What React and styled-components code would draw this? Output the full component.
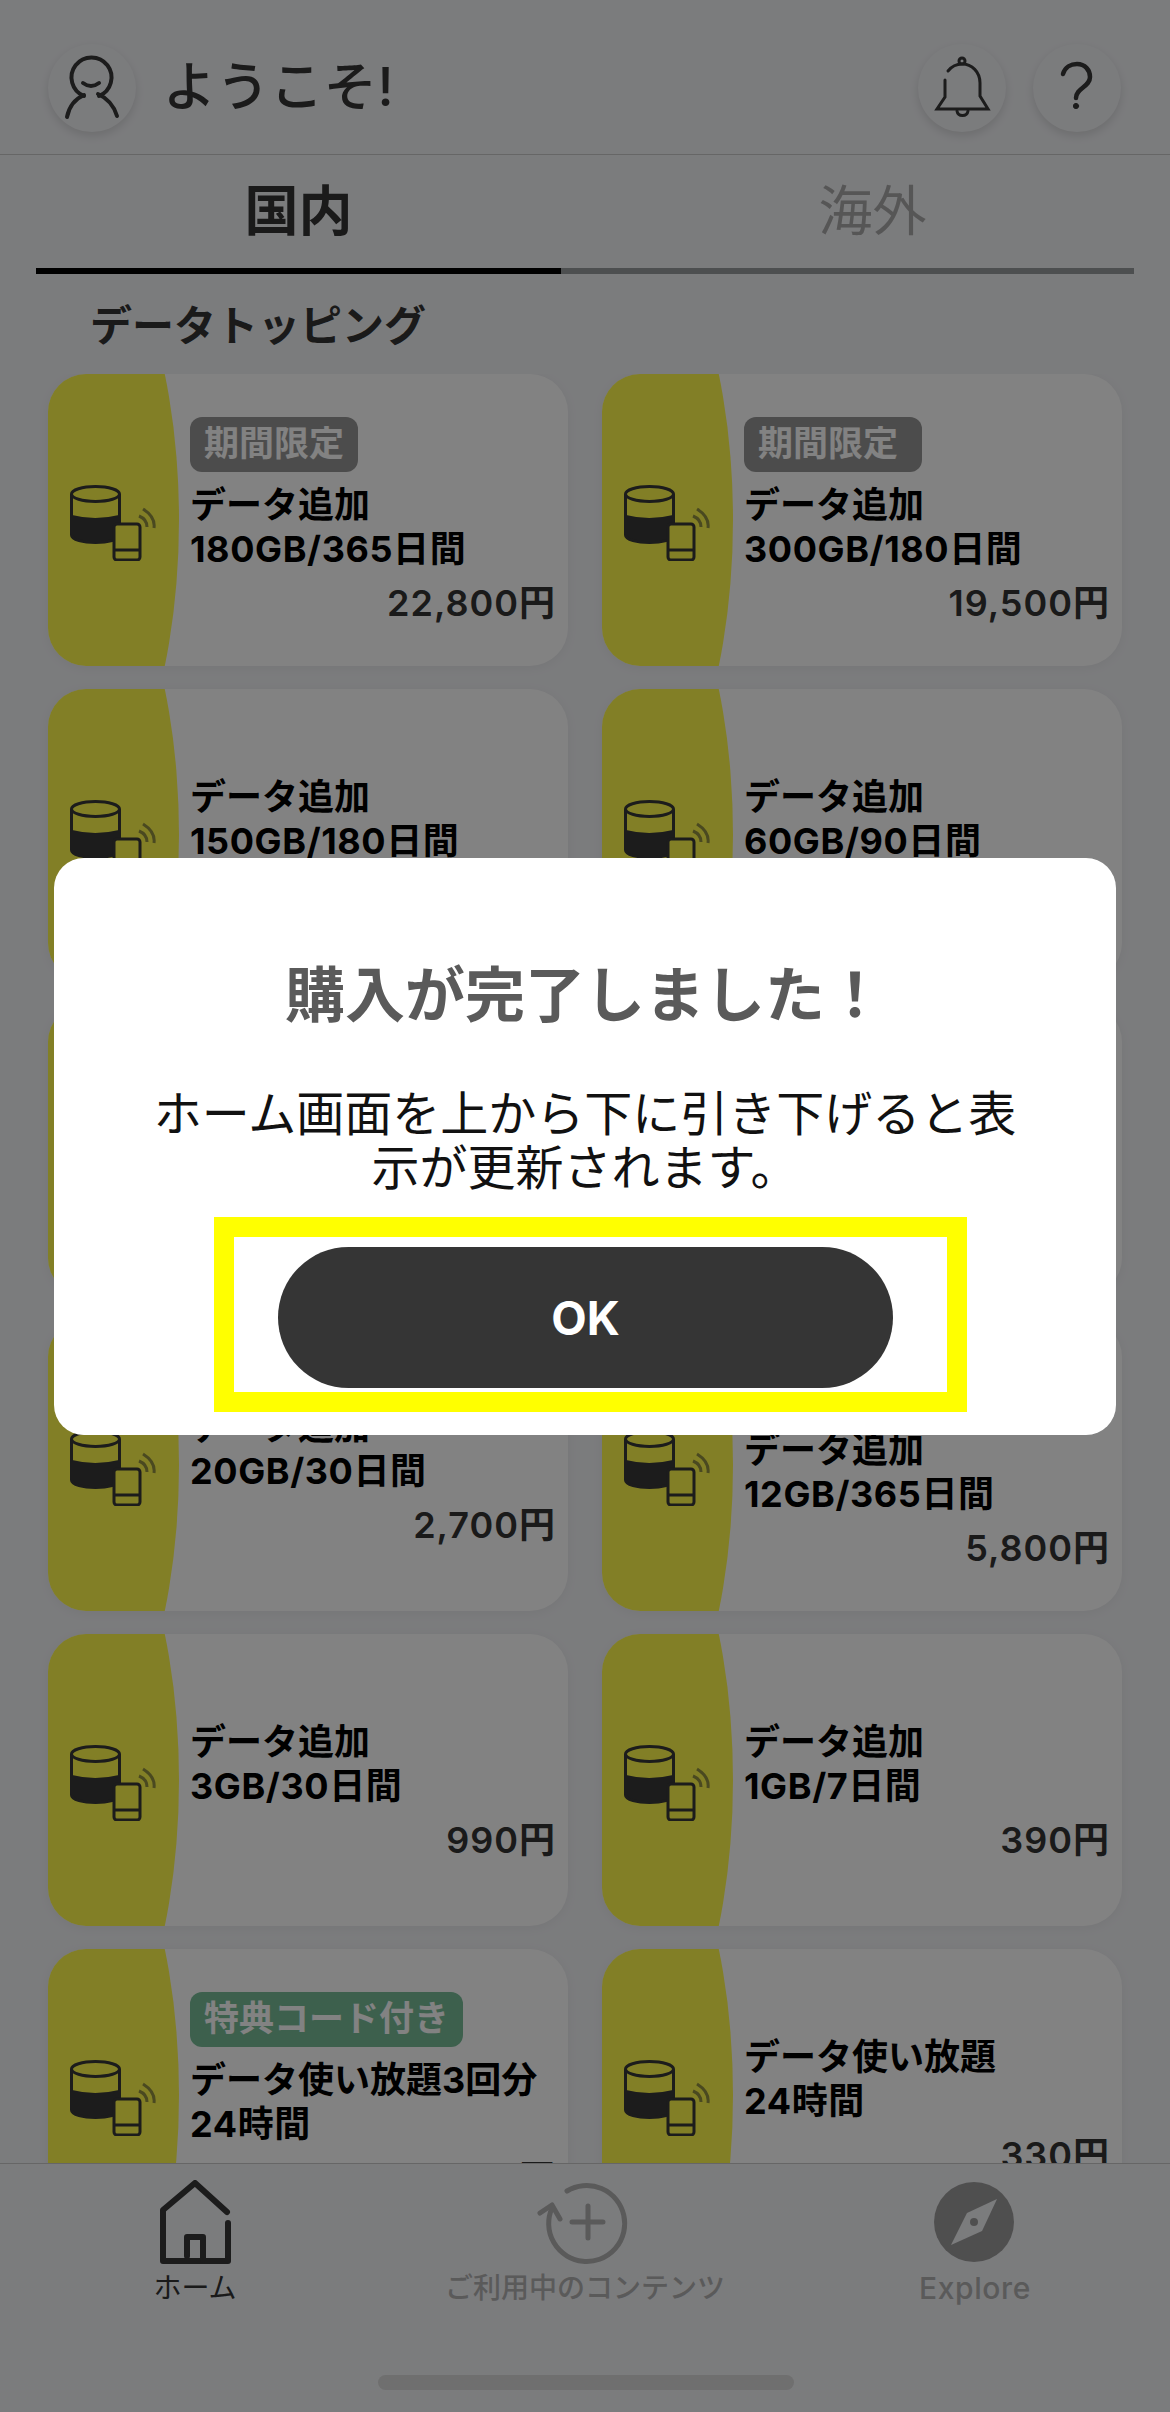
import React from "react";
import styled, { createGlobalStyle } from "styled-components";

const FONT = `Inter, "Noto Sans CJK JP", "Noto Sans", sans-serif`;
const PAGE_BG = "#f2f3f6";
const SWATCH = "#fffa4b";

const GlobalStyle = createGlobalStyle`
  html, body {
    margin: 0;
    padding: 0;
    background: ${PAGE_BG};
    font-family: ${FONT};
  }
  * { box-sizing: border-box; }
`;

const Page = styled.div`
  position: relative;
  width: 1170px;
  height: 2412px;
  display: flex;
  flex-direction: column;
  overflow: hidden;
  background: ${PAGE_BG};
`;

const Header = styled.header`
  height: 155px;
  flex: none;
  display: flex;
  align-items: center;
  gap: 27px;
  padding: 22px 49px 0 48px;
  border-bottom: 1px solid #c9c9c9;
`;

const HeaderTitle = styled.h1`
  flex: 1;
  margin: 0 0 10px 0;
  font-size: 53px;
  font-weight: 500;
  letter-spacing: 0.6px;
  color: #363636;
`;

const RoundButton = styled.div`
  width: 88px;
  height: 88px;
  flex: none;
  border-radius: 50%;
  background: ${PAGE_BG};
  box-shadow: 0 4px 10px rgba(0, 0, 0, 0.12);
  svg {
    display: block;
  }
`;

const Tabs = styled.nav`
  height: 119px;
  flex: none;
  margin: 0 36px;
  display: grid;
  grid-template-columns: 525px 573px;
`;

const Tab = styled.div`
  display: flex;
  align-items: center;
  justify-content: center;
  font-size: 54px;
  padding-bottom: 8px;
  padding-left: ${({ $active }) => ($active ? 0 : 50)}px;
  font-weight: ${({ $active }) => ($active ? 700 : 400)};
  color: ${({ $active }) => ($active ? "#333" : "#aaa")};
  border-bottom: 6px solid ${({ $active }) => ($active ? "#000" : "#979c9e")};
`;

const SectionLabel = styled.h2`
  flex: none;
  height: 100px;
  margin: 0;
  padding-left: 90px;
  line-height: 103px;
  font-size: 42px;
  font-weight: 700;
  color: #333;
`;

const Content = styled.main`
  flex: 1;
  min-height: 0;
  overflow: hidden;
`;

const CardGrid = styled.div`
  display: grid;
  grid-template-columns: 520px 520px;
  grid-auto-rows: 292px;
  gap: 23px 34px;
  padding: 0 48px;
`;

const Card = styled.article`
  display: flex;
  background: #fff;
  border-radius: 38px;
  overflow: hidden;
  box-shadow: 0 2px 12px rgba(0, 0, 0, 0.05);
`;

const Swatch = styled.div`
  width: 131px;
  flex: none;
  display: flex;
  align-items: center;
  justify-content: center;
  padding: 6px 2px 0 0;
  background: ${SWATCH};
  clip-path: ellipse(131px 322px at 0 50%);
`;

const CardBody = styled.div`
  flex: 1;
  min-width: 0;
  margin-left: 11px;
  padding: ${({ $tagged }) => ($tagged ? 43 : 86)}px 12px 0 0;
`;

const Tag = styled.span`
  display: inline-block;
  height: 55px;
  padding: 0 ${({ $wide }) => ($wide ? 24 : 14)}px 0 14px;
  margin-bottom: 11px;
  border-radius: 12px;
  font-size: 35px;
  line-height: 53px;
  font-weight: 700;
  color: #fff;
  vertical-align: top;
  background: ${({ $green }) => ($green ? "#78bd98" : "#969696")};
`;

const CardTitle = styled.div`
  font-size: 36px;
  line-height: 44px;
  font-weight: 700;
  color: #000;
  white-space: nowrap;
  letter-spacing: ${({ $sub }) => ($sub ? 0.6 : 0)}px;
`;

const Price = styled.div`
  margin-top: 10px;
  font-size: 36px;
  line-height: 44px;
  font-weight: 600;
  letter-spacing: 1px;
  text-align: right;
  color: #333;
`;

const BottomBar = styled.footer`
  height: 249px;
  flex: none;
  background: ${PAGE_BG};
  border-top: 1px solid #c9c9c9;
  padding-top: 16px;
`;

const BottomNav = styled.div`
  display: grid;
  grid-template-columns: repeat(3, 390px);
`;

const NavItem = styled.div`
  display: flex;
  flex-direction: column;
  align-items: center;
  color: ${({ $active }) => ($active ? "#333" : "#b0b0b0")};
  svg {
    display: block;
  }
`;

const NavLabel = styled.span`
  margin-top: 2px;
  font-size: ${({ $latin }) => ($latin ? 30 : 28)}px;
  line-height: 40px;
  letter-spacing: ${({ $latin }) => ($latin ? 0.6 : 0)}px;
  font-weight: ${({ $active }) => ($active ? 400 : 500)};
  white-space: nowrap;
`;

const HomeIndicator = styled.div`
  width: 416px;
  height: 15px;
  margin: 67px 0 0 378px;
  border-radius: 8px;
  background: #d9d9d9;
`;

const Overlay = styled.div`
  position: absolute;
  inset: 0;
  display: flex;
  justify-content: center;
  align-items: flex-start;
  padding-top: 858px;
  background: rgba(0, 0, 0, 0.49);
`;

const Modal = styled.div`
  width: 1062px;
  height: 577px;
  padding-top: 97px;
  display: flex;
  flex-direction: column;
  align-items: center;
  background: #fff;
  border-radius: 30px;
`;

const ModalTitle = styled.h3`
  margin: 0;
  font-size: 60px;
  line-height: 80px;
  font-weight: 700;
  color: #5a5a5a;
`;

const ModalText = styled.p`
  width: 880px;
  margin: 52px 0 22px;
  font-size: 48px;
  line-height: 54px;
  font-weight: 400;
  text-align: center;
  color: #111;
`;

const Highlight = styled.div`
  align-self: flex-start;
  width: 753px;
  height: 195px;
  margin-left: 160px;
  padding: 10px 54px 4px 44px;
  border: 20px solid #ffff00;
`;

const OkButton = styled.button`
  display: block;
  width: 615px;
  height: 141px;
  border: 0;
  border-radius: 71px;
  background: #353535;
  color: #fff;
  font-family: ${FONT};
  font-size: 46px;
  font-weight: 700;
`;

const PersonIcon = () => (
  <svg width="88" height="88" viewBox="0 0 88 88" fill="none" stroke="#373737" strokeWidth="4" strokeLinecap="round">
    <path d="M36 52A20 20 0 1 1 51 52" />
    <path d="M35 39Q43 45 51 39" />
    <path d="M36 51C27 55 21 63 19 73" />
    <path d="M50 50C59 54 66 62 69 72" />
  </svg>
);

const BellIcon = () => (
  <svg width="88" height="88" viewBox="0 0 88 88" fill="none" stroke="#373737" strokeWidth="3" strokeLinecap="round" strokeLinejoin="miter">
    <circle cx="44" cy="17" r="3" />
    <path d="M30 27C34 22 39 20 44 20C54 20 62 28 62 39V52L70 65H19L27 53V36" />
    <path d="M39 67C40 73 49 73 50 67" />
  </svg>
);

const QuestionIcon = () => (
  <svg width="88" height="88" viewBox="0 0 88 88" fill="none" stroke="#373737" strokeWidth="4.5" strokeLinecap="round">
    <path d="M30 30C32 23 38 20 44 20C52 20 57 26 57 33C57 43 43 44 43 54" />
    <circle cx="43" cy="62" r="2.6" fill="#373737" strokeWidth="1" />
  </svg>
);

const DataIcon = () => (
  <svg width="86" height="76" viewBox="0 0 86 76" fill="none">
    <path d="M2 30Q25 36 49 30V50C49 60 2 60 2 50Z" fill="#373737" />
    <g stroke="#373737" strokeWidth="3">
      <ellipse cx="25.5" cy="9" rx="24" ry="7.5" />
      <path d="M1.5 9V50C1.5 60 49.5 60 49.5 50V9" />
      <rect x="44" y="39" width="26" height="36" rx="3" fill={SWATCH} />
      <path d="M44 65H70" />
    </g>
    <path d="M73 24C81 29 85 36 84 43M69 31C74 33 77 37 77 42" stroke="#373737" strokeOpacity="0.55" strokeWidth="3" />
  </svg>
);

const HomeIcon = () => (
  <svg width="72" height="86" viewBox="0 0 72 86" fill="none" stroke="#373737" strokeWidth="6" strokeLinecap="round" strokeLinejoin="round">
    <path d="M68 32L36 3L4 30V81H69V43" />
    <path d="M28 76V57H44V80" />
  </svg>
);

const RenewIcon = () => (
  <svg width="100" height="86" viewBox="0 0 100 86" fill="none" stroke="#b0b0b0" strokeWidth="5" strokeLinecap="round" strokeLinejoin="round">
    <path d="M32 11A38 38 0 1 1 17 28" />
    <path d="M5 33L17 25L25 39" />
    <path d="M37 42H68M53 26V58" />
  </svg>
);

const CompassIcon = () => (
  <svg width="100" height="86" viewBox="0 0 100 86">
    <circle cx="49" cy="42" r="40" fill="#9c9c9c" />
    <path d="M72 19L57 51L26 65L42 33Z" fill={PAGE_BG} />
    <circle cx="49" cy="42" r="4" fill="#9c9c9c" />
  </svg>
);

const cards = [
  { tag: "期間限定", title: "データ追加", sub: "180GB/365日間", price: "22,800円" },
  { tag: "期間限定", wide: true, title: "データ追加", sub: "300GB/180日間", price: "19,500円" },
  { title: "データ追加", sub: "150GB/180日間", price: "16,800円" },
  { title: "データ追加", sub: "60GB/90日間", price: "7,800円" },
  { title: "データ追加", sub: "50GB/30日間", price: "5,800円" },
  { title: "データ追加", sub: "30GB/30日間", price: "3,900円" },
  { title: "データ追加", sub: "20GB/30日間", price: "2,700円" },
  { tag: "期間限定", title: "データ追加", sub: "12GB/365日間", price: "5,800円" },
  { title: "データ追加", sub: "3GB/30日間", price: "990円" },
  { title: "データ追加", sub: "1GB/7日間", price: "390円" },
  { tag: "特典コード付き", green: true, title: "データ使い放題3回分", sub: "24時間", price: "1,650円" },
  { title: "データ使い放題", sub: "24時間", price: "330円" },
];

const App = () => {
  return (
    <Page>
      <GlobalStyle />
      <Header>
        <RoundButton>
          <PersonIcon />
        </RoundButton>
        <HeaderTitle>ようこそ!</HeaderTitle>
        <RoundButton>
          <BellIcon />
        </RoundButton>
        <RoundButton>
          <QuestionIcon />
        </RoundButton>
      </Header>

      <Tabs>
        <Tab $active>国内</Tab>
        <Tab>海外</Tab>
      </Tabs>

      <SectionLabel>データトッピング</SectionLabel>

      <Content>
        <CardGrid>
          {cards.map((card) => (
            <Card key={card.sub + card.title}>
              <Swatch>
                <DataIcon />
              </Swatch>
              <CardBody $tagged={!!card.tag}>
                {card.tag && (
                  <Tag $green={card.green} $wide={card.wide}>
                    {card.tag}
                  </Tag>
                )}
                <CardTitle>{card.title}</CardTitle>
                <CardTitle $sub>{card.sub}</CardTitle>
                <Price>{card.price}</Price>
              </CardBody>
            </Card>
          ))}
        </CardGrid>
      </Content>

      <BottomBar>
        <BottomNav>
          <NavItem $active>
            <HomeIcon />
            <NavLabel $active>ホーム</NavLabel>
          </NavItem>
          <NavItem>
            <RenewIcon />
            <NavLabel>ご利用中のコンテンツ</NavLabel>
          </NavItem>
          <NavItem>
            <CompassIcon />
            <NavLabel $latin>Explore</NavLabel>
          </NavItem>
        </BottomNav>
        <HomeIndicator />
      </BottomBar>

      <Overlay>
        <Modal>
          <ModalTitle>購入が完了しました！</ModalTitle>
          <ModalText>ホーム画面を上から下に引き下げると表示が更新されます。</ModalText>
          <Highlight>
            <OkButton>OK</OkButton>
          </Highlight>
        </Modal>
      </Overlay>
    </Page>
  );
};

export default App;
